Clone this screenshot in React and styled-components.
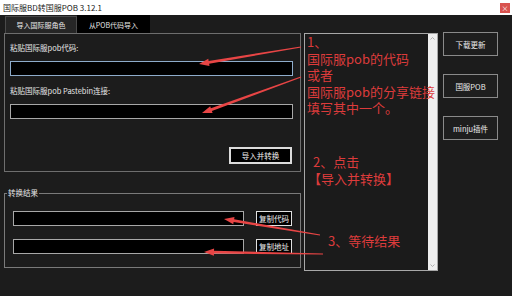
import React from "react";
import styled, { createGlobalStyle } from "styled-components";

const Global = createGlobalStyle`
  html, body { margin: 0; padding: 0; background: #1c1c1c; }
  * { box-sizing: border-box; }
`;

const UI = `"Noto Sans CJK SC", "Noto Sans", sans-serif`;

const Window = styled.div`
  position: relative;
  width: 512px;
  height: 296px;
  overflow: hidden;
  display: flex;
  flex-direction: column;
  background: #1c1c1c;
  font-family: ${UI};
`;

const TitleBar = styled.div`
  height: 15px;
  flex: none;
  background: #ffffff;
  display: flex;
  align-items: center;
  justify-content: space-between;
  padding: 0 2px 0 3px;
`;

const Title = styled.span`
  font-size: 8px;
  line-height: 10px;
  color: #1a1a1a;
`;

const CloseBtn = styled.div`
  width: 10px;
  height: 10px;
  background: #d9534f;
  color: #fff;
  font-size: 7px;
  line-height: 10px;
  text-align: center;
`;

const Body = styled.div`
  flex: 1;
  display: flex;
  align-items: flex-start;
  padding-left: 4px;
`;

const LeftCol = styled.div`
  width: 297px;
  display: flex;
  flex-direction: column;
`;

const TabStrip = styled.div`
  height: 18px;
  display: flex;
  align-items: flex-end;
  padding-left: 1px;
`;

const Tab = styled.div`
  width: ${(p) => p.$w}px;
  height: ${(p) => (p.$active ? 18 : 17)}px;
  background: ${(p) => (p.$active ? "#000" : "#262626")};
  border: 1px solid ${(p) => (p.$active ? "#000" : "#4a4a4a")};
  border-bottom: none;
  color: #e6e6e6;
  font-size: 7px;
  display: flex;
  align-items: center;
  justify-content: center;
`;

const TabPage = styled.div`
  height: 139px;
  border: 1px solid #6e6e6e;
  padding: 8px 7px 0 5px;
  display: flex;
  flex-direction: column;
`;

const FieldLabel = styled.div`
  font-size: 7.5px;
  line-height: 10px;
  height: 10px;
  color: #e6e6e6;
  margin-top: ${(p) => p.$mt}px;
`;

const TextInput = styled.div`
  height: ${(p) => p.$h || 15}px;
  width: ${(p) => (p.$w ? `${p.$w}px` : "auto")};
  background: #000;
  border: ${(p) => (p.$focus ? "1.5px solid #8eaccb" : "1.5px solid #a8a8a8")};
  margin-top: ${(p) => p.$mt || 0}px;
`;

const ActionButton = styled.div`
  align-self: flex-end;
  width: 63px;
  height: 17px;
  margin-top: 28px;
  margin-right: 1px;
  background: #000;
  border: 2px solid #dcdcdc;
  color: #f0f0f0;
  font-size: 7.5px;
  display: flex;
  align-items: center;
  justify-content: center;
`;

const GroupBox = styled.fieldset`
  margin: 16px 0 0 0;
  padding: 13px 8px 13px 8px;
  border: 1px solid #7a7a7a;
  display: flex;
  flex-direction: column;
  gap: 13px;
  min-width: 0;
`;

const Legend = styled.legend`
  margin-left: -6px;
  padding: 0 1px;
  font-size: 7.5px;
  line-height: 10px;
  color: #e6e6e6;
`;

const ResultRow = styled.div`
  display: flex;
  align-items: center;
  gap: 12px;
`;

const SmallButton = styled.div`
  width: 36px;
  height: 15px;
  background: #000;
  border: 1.5px solid #e0e0e0;
  color: #f0f0f0;
  font-size: 7.5px;
  display: flex;
  align-items: center;
  justify-content: center;
`;

const NoteBox = styled.div`
  position: relative;
  margin: 18px 0 0 3px;
  width: 134px;
  height: 238px;
  border: 1px solid #a8a8a8;
  background: #1b1b1b;
  display: flex;
`;

const NoteContent = styled.div`
  position: relative;
  z-index: 1;
  width: 122px;
  margin-right: -9px;
  padding: 0 0 0 2px;
  color: #dd3b3b;
  font-size: 13px;
  line-height: 16.6px;
  white-space: nowrap;
`;

const NoteLine = styled.div`
  margin-top: ${(p) => p.$mt || 0}px;
  padding-left: ${(p) => p.$indent || 0}px;
`;

const ScrollBar = styled.div`
  margin-left: auto;
  width: 9px;
  background: #efefef;
  display: flex;
  flex-direction: column;
  justify-content: space-between;
  align-items: center;
  padding: 3px 0;
`;

const RightCol = styled.div`
  margin: 17px 0 0 5px;
  display: flex;
  flex-direction: column;
  gap: 18px;
`;

const SideButton = styled.div`
  width: 55px;
  height: 24px;
  border: 1px solid #8a8a8a;
  background: #1e1e1e;
  color: #ececec;
  font-size: 7.5px;
  display: flex;
  align-items: center;
  justify-content: center;
`;

const Overlay = styled.svg`
  position: absolute;
  left: 0;
  top: 0;
  pointer-events: none;
`;

function arrowPoints(x1, y1, x2, y2) {
  const dx = x2 - x1;
  const dy = y2 - y1;
  const len = Math.hypot(dx, dy);
  const ux = dx / len;
  const uy = dy / len;
  const nx = -uy;
  const ny = ux;
  const headLen = 10;
  const headW = 3.6;
  const shaftW = 1.4;
  const tailW = 0.5;
  const bx = x2 - ux * headLen;
  const by = y2 - uy * headLen;
  const pts = [
    [x1 + nx * tailW, y1 + ny * tailW],
    [bx + nx * shaftW, by + ny * shaftW],
    [bx + nx * headW, by + ny * headW],
    [x2, y2],
    [bx - nx * headW, by - ny * headW],
    [bx - nx * shaftW, by - ny * shaftW],
    [x1 - nx * tailW, y1 - ny * tailW],
  ];
  return pts.map((p) => p.map((v) => v.toFixed(1)).join(",")).join(" ");
}

const arrows = [
  [301, 47, 199, 64],
  [301, 77, 202, 113],
  [320, 235, 224, 219],
  [323, 254, 204, 252],
];

const Chevron = ({ down }) => (
  <svg width="5" height="3" viewBox="0 0 5 3">
    <path
      d={down ? "M0.5 0.5 L2.5 2.5 L4.5 0.5" : "M0.5 2.5 L2.5 0.5 L4.5 2.5"}
      fill="none"
      stroke="#a0a0a0"
      strokeWidth="0.8"
    />
  </svg>
);

export default function App() {
  return (
    <>
      <Global />
      <Window>
        <TitleBar>
          <Title>国际服BD转国服POB 3.12.1</Title>
          <CloseBtn>×</CloseBtn>
        </TitleBar>
        <Body>
          <LeftCol>
            <TabStrip>
              <Tab $w={72}>导入国际服角色</Tab>
              <Tab $w={73} $active>
                从POB代码导入
              </Tab>
            </TabStrip>
            <TabPage>
              <FieldLabel $mt={1}>粘贴国际服pob代码:</FieldLabel>
              <TextInput $focus $mt={8} />
              <FieldLabel $mt={10}>粘贴国际服pob Pastebin连接:</FieldLabel>
              <TextInput $mt={8} />
              <ActionButton>导入并转换</ActionButton>
            </TabPage>
            <GroupBox>
              <Legend>转换结果</Legend>
              <ResultRow>
                <TextInput $w={231} />
                <SmallButton>复制代码</SmallButton>
              </ResultRow>
              <ResultRow>
                <TextInput $w={231} />
                <SmallButton>复制地址</SmallButton>
              </ResultRow>
            </GroupBox>
          </LeftCol>
          <NoteBox>
            <NoteContent>
              <NoteLine>1、</NoteLine>
              <NoteLine>国际服pob的代码</NoteLine>
              <NoteLine>或者</NoteLine>
              <NoteLine>国际服pob的分享链接</NoteLine>
              <NoteLine>填写其中一个。</NoteLine>
              <NoteLine $mt={37} $indent={6}>
                2、点击
              </NoteLine>
              <NoteLine $indent={1}>【导入并转换】</NoteLine>
              <NoteLine $mt={46} $indent={21}>
                3、等待结果
              </NoteLine>
            </NoteContent>
            <ScrollBar>
              <Chevron />
              <Chevron down />
            </ScrollBar>
          </NoteBox>
          <RightCol>
            <SideButton>下载更新</SideButton>
            <SideButton>国服POB</SideButton>
            <SideButton>minju插件</SideButton>
          </RightCol>
        </Body>
        <Overlay width="512" height="296" viewBox="0 0 512 296">
          {arrows.map((a, i) => (
            <polygon key={i} points={arrowPoints(...a)} fill="#e84545" />
          ))}
        </Overlay>
      </Window>
    </>
  );
}
